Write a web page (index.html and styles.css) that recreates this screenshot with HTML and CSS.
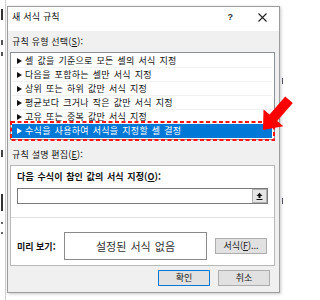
FILE: index.html
```html
<!DOCTYPE html>
<html lang="ko">
<head>
<meta charset="utf-8">
<title>새 서식 규칙</title>
<link rel="stylesheet" href="styles.css">
</head>
<body>
<div class="screen">
  <svg class="backdrop" width="295" height="300" viewBox="0 0 295 300">
    <rect x="5" y="0" width="1" height="300" fill="#d0d0d0"/>
    <rect x="1" y="9" width="2" height="11" fill="#333"/>
    <rect x="1" y="40" width="2" height="5" fill="#555"/>
    <rect x="1" y="52" width="2" height="4" fill="#555"/>
    <rect x="1" y="150" width="2" height="7" fill="#444"/>
    <rect x="1" y="194" width="2" height="17" fill="#333"/>
    <rect x="1" y="222" width="2" height="2" fill="#666"/>
    <rect x="1" y="232" width="2" height="2" fill="#666"/>
    <rect x="282" y="78" width="1" height="6" fill="#556"/>
    <rect x="282" y="198" width="1" height="6" fill="#556"/>
  </svg>
  <div class="dialog">
    <div class="titlebar">
      <span class="title">새 서식 규칙</span>
      <div class="controls">
        <span class="help">?</span>
        <svg class="close" width="9" height="9" viewBox="0 0 9 9"><path d="M0.5 0.5 L8.5 8.5 M8.5 0.5 L0.5 8.5" stroke="#222" stroke-width="1.1"/></svg>
      </div>
    </div>
    <div class="body">
      <div class="label">규칙 유형 선택(<u>S</u>):</div>
      <ul class="rules">
        <li><i class="tri"></i>셀 값을 기준으로 모든 셀의 서식 지정</li>
        <li><i class="tri"></i>다음을 포함하는 셀만 서식 지정</li>
        <li><i class="tri"></i>상위 또는 하위 값만 서식 지정</li>
        <li><i class="tri"></i>평균보다 크거나 작은 값만 서식 지정</li>
        <li><i class="tri"></i>고유 또는 중복 값만 서식 지정</li>
        <li class="sel"><i class="tri"></i>수식을 사용하여 서식을 지정할 셀 결정</li>
      </ul>
      <div class="label label-edit">규칙 설명 편집(<u>E</u>):</div>
      <div class="panel">
        <div class="panel-top">
          <div class="formula-title">다음 수식이 참인 값의 서식 지정(<u>O</u>):</div>
          <div class="input">
            <span class="collapse">
              <svg width="7" height="8" viewBox="0 0 7 8"><path d="M0.5 4 L3.5 0.8 L6.5 4 Z" fill="#111"/><rect x="2.5" y="4" width="2" height="2" fill="#111"/><rect x="0.5" y="7" width="6" height="1" fill="#111"/></svg>
            </span>
          </div>
        </div>
        <div class="panel-bottom">
          <span class="pv-label">미리 보기:</span>
          <div class="pv-box">설정된 서식 없음</div>
          <button class="btn fmt">서식(<u>F</u>)...</button>
        </div>
      </div>
      <div class="actions">
        <button class="btn ok">확인</button>
        <button class="btn">취소</button>
      </div>
    </div>
  </div>
  <svg class="overlay" width="295" height="300" viewBox="0 0 295 300">
    <rect x="11" y="122" width="263" height="18" fill="none" stroke="#ff1010" stroke-width="2" stroke-dasharray="4 2.5"/>
    <polygon points="263,130 263.5,109.4 269.6,114.6 285.2,96.4 292.8,102.9 277.2,121 283.3,126.3" fill="#ff0000"/>
  </svg>
</div>
</body>
</html>
```

FILE: styles.css
```css
* {
  box-sizing: border-box;
}

html, body {
  margin: 0;
  padding: 0;
  background: #ffffff;
}

body {
  font-family: "Noto Sans CJK KR", "Noto Sans", sans-serif;
  font-size: 9px;
  color: #111;
}

.screen {
  position: relative;
  width: 295px;
  height: 300px;
  padding: 6px 0 0 7px;
  overflow: hidden;
}

.backdrop {
  position: absolute;
  left: 0;
  top: 0;
}

.overlay {
  position: absolute;
  left: 0;
  top: 0;
  pointer-events: none;
}

.dialog {
  position: relative;
  width: 273px;
  height: 287px;
  border: 1px solid #9c9c9c;
  box-shadow: 1px 1px 3px rgba(0, 0, 0, 0.22);
  display: flex;
  flex-direction: column;
  background: #f0f0f0;
}

.titlebar {
  height: 24px;
  background: #ffffff;
  display: flex;
  justify-content: space-between;
  align-items: flex-start;
  padding: 4px 0 0 4px;
  line-height: 12px;
}

.title {
  font-size: 9px;
  color: #111;
  letter-spacing: 0.2px;
}

.controls {
  display: flex;
  align-items: center;
  height: 12px;
}

.help {
  font-family: "Liberation Sans", sans-serif;
  font-size: 9px;
  font-weight: bold;
  color: #333;
}

.close {
  margin-left: 25px;
  margin-right: 12px;
}

.body {
  flex: 1;
  padding: 0 4px 0 2px;
  display: flex;
  flex-direction: column;
}

.label {
  line-height: 12px;
  margin-top: 5px;
  padding-left: 2px;
  letter-spacing: 0.2px;
}

.label-edit {
  margin-top: 9px;
}

u {
  text-decoration: underline;
  text-underline-offset: 1px;
}

.rules {
  list-style: none;
  margin: 4px 0 0 0;
  padding: 1px 2px 1px 1px;
  background: #ffffff;
  border: 1px solid #8a8f98;
  height: 88px;
}

.rules li {
  height: 14px;
  line-height: 14px;
  padding-left: 5px;
  display: flex;
  align-items: center;
  word-spacing: 1px;
  letter-spacing: 0.3px;
  border-bottom: 1px solid #f1f1f1;
  white-space: nowrap;
}

.tri {
  display: inline-block;
  width: 0;
  height: 0;
  border-top: 3px solid transparent;
  border-bottom: 3px solid transparent;
  border-left: 5px solid #111;
  margin-right: 3px;
}

.rules li.sel {
  background: #0078d7;
  color: #ffffff;
  border-bottom-color: #0078d7;
}

.rules li.sel .tri {
  border-left-color: #ffffff;
}

.panel {
  margin-top: 4px;
  background: #ffffff;
  border: 1px solid #b8b8b8;
  display: flex;
  flex-direction: column;
}

.panel-top {
  padding: 5px 6px 13px 6px;
  border-bottom: 1px solid #e0e0e0;
}

.formula-title {
  font-weight: 700;
  line-height: 12px;
  word-spacing: 1px;
  letter-spacing: 0.1px;
}

.input {
  margin-top: 5px;
  height: 16px;
  border: 1px solid #7a7a7a;
  background: #ffffff;
  display: flex;
  justify-content: flex-end;
}

.collapse {
  width: 15px;
  height: 14px;
  background: #e6e6e6;
  border: 1px solid #b0b0b0;
  display: flex;
  align-items: center;
  justify-content: center;
}

.panel-bottom {
  padding: 14px 6px 5px 6px;
  display: flex;
  align-items: center;
}

.pv-label {
  width: 47px;
  font-weight: 700;
  white-space: nowrap;
}

.pv-box {
  width: 143px;
  height: 28px;
  border: 1px solid #8a8a8a;
  background: #ffffff;
  display: flex;
  align-items: center;
  justify-content: center;
  font-size: 11px;
  color: #333;
  word-spacing: 1px;
}

.btn {
  font-family: "Noto Sans CJK KR", "Noto Sans", sans-serif;
  font-size: 9px;
  color: #222;
  width: 52px;
  height: 16px;
  padding: 0;
  line-height: 14px;
  background: #e1e1e1;
  border: 1px solid #adadad;
}

.fmt {
  margin-left: 8px;
}

.actions {
  margin-top: 4px;
  padding-right: 5px;
  display: flex;
  justify-content: flex-end;
  gap: 8px;
}

.ok {
  border-color: #0078d7;
}
```
